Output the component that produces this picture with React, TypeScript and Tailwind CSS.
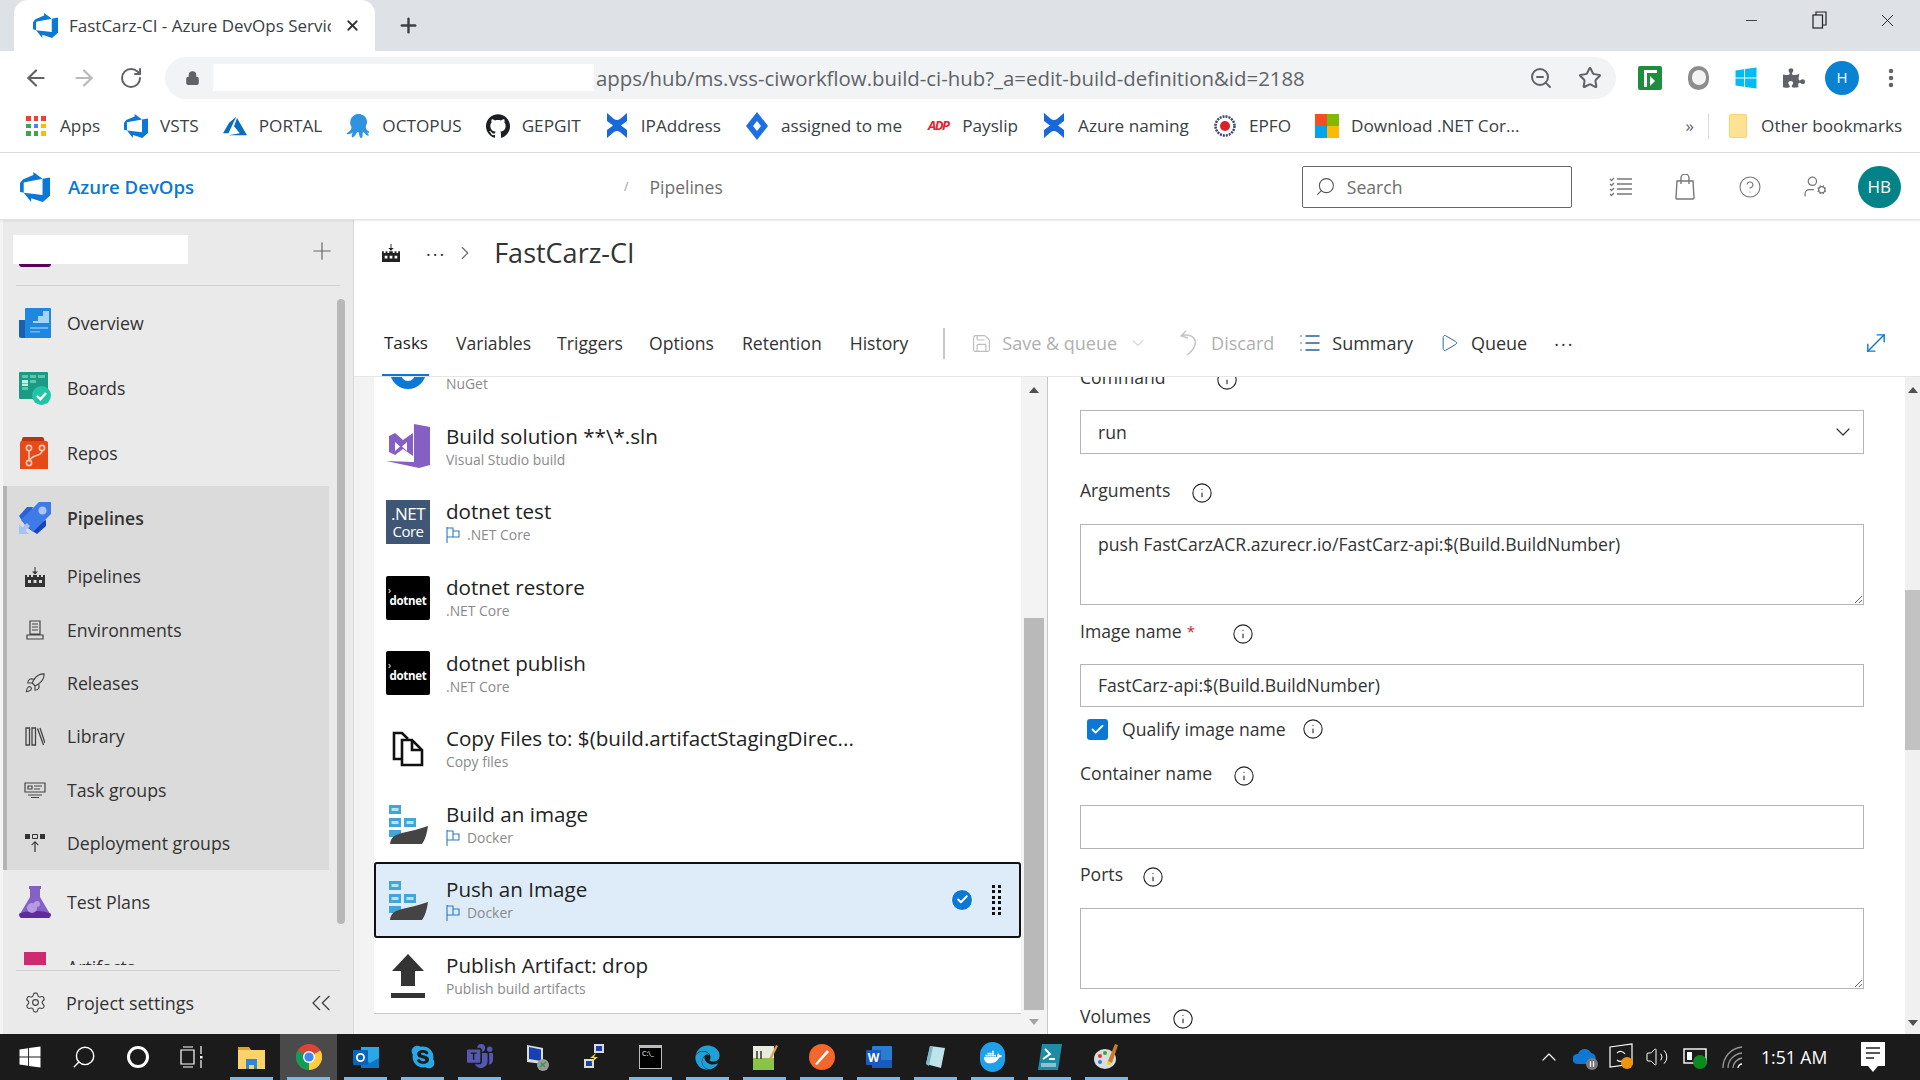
import {
  ArrowLeft, ArrowRight, RotateCw, Lock, ZoomOut, Star, MoreVertical, Plus, X, Minus, Search, CircleHelp,
  UserCog, Settings, ChevronsLeft, ChevronDown, ChevronRight, Info, Save, List, Play, MoveDiagonal,
  Rocket, Check, Volume2, ChevronUp,
} from "lucide-react";
import { SiOctopusdeploy, SiGithub } from "react-icons/si";
import { FaWindows, FaSkype, FaDocker, FaEdge, FaPuzzlePiece } from "react-icons/fa";
import { BsMicrosoftTeams } from "react-icons/bs";

function DevOpsLogo({ className }: { className?: string }) {
  return (
    <svg className={className} viewBox="0 0 24 24" fill="currentColor">
      <path d="M0 8.877L2.247 5.91l8.405-3.416V.022l7.37 5.393L2.966 8.338v8.225L0 15.707zm24-4.45v14.651l-5.753 4.9-9.303-3.057v3.056l-5.978-7.416 15.057 1.798V5.415z" />
    </svg>
  );
}

function AzureLogo({ className }: { className?: string }) {
  return (
    <svg className={className} viewBox="0 0 24 24" fill="currentColor">
      <path d="M5.483 21.3H24L14.025 4.013l-3.038 8.347 5.836 6.938L5.483 21.3zM13.23 2.7L6.105 8.677 0 19.253h5.505v.014L13.23 2.7z" />
    </svg>
  );
}

function ConfluenceMark() {
  return (
    <svg width="24" height="27" viewBox="0 0 24 27" fill="#1868db">
      <path d="M2 1l7 6q3 2 6 0l7-6v8l-6 4.5 6 4.5v8l-7-6q-3-2-6 0l-7 6v-8l6-4.5L2 9z" />
    </svg>
  );
}

function JiraMark() {
  return (
    <svg width="22" height="28" viewBox="0 0 22 28">
      <path d="M11 0l11 14-11 14L0 14z" fill="#1d6fe8" />
      <path d="M11 9l4 5-4 5-4-5z" fill="#fff" />
    </svg>
  );
}

function AppsGrid() {
  const colors = ["#ea4335", "#ea4335", "#ea4335", "#34a853", "#4285f4", "#fbbc05", "#34a853", "#34a853", "#fbbc05"];
  return (
    <div className="grid grid-cols-3 gap-[3px] w-[20px]">
      {colors.map((c, i) => (
        <span key={i} className="w-[4.5px] h-[4.5px]" style={{ background: c }} />
      ))}
    </div>
  );
}

function MsLogo() {
  return (
    <div className="grid grid-cols-2 w-[24px] h-[24px]">
      <span className="bg-[#f25022]" />
      <span className="bg-[#7fba00]" />
      <span className="bg-[#00a4ef]" />
      <span className="bg-[#ffb900]" />
    </div>
  );
}

function Bookmark({ icon, label }: { icon: React.ReactNode; label: string }) {
  return (
    <div className="flex items-center gap-[12px]">
      <span className="w-[24px] h-[24px] flex items-center justify-center shrink-0">{icon}</span>
      <span className="text-[17.2px] text-[#3c4043] whitespace-nowrap">{label}</span>
    </div>
  );
}

function ChromeFrame() {
  return (
    <>
      <div className="h-[51px] bg-[#dee1e6] flex items-end pl-[14px] shrink-0">
        <div className="w-[361px] h-[51px] bg-white rounded-t-[14px] flex items-center pl-[19px] pr-[14px]">
          <DevOpsLogo className="text-[#0a78d4] w-[25px] h-[25px] shrink-0" />
          <div className="ml-[11px] w-[262px] overflow-hidden whitespace-nowrap text-[17px] text-[#3c4043]">
            FastCarz-CI - Azure DevOps Services
          </div>
          <X className="ml-auto w-[17px] h-[17px] text-[#333]" strokeWidth={2.5} />
        </div>
        <div className="h-[51px] flex items-center ml-[22px]">
          <Plus className="w-[23px] h-[23px] text-[#3c4043]" strokeWidth={2.5} />
        </div>
        <div className="ml-auto h-[40px] self-start flex items-center text-[#222]">
          <div className="w-[66px] flex justify-center"><Minus className="w-[17px] h-[17px]" strokeWidth={1.2} /></div>
          <div className="w-[70px] flex justify-center">
            <svg width="15" height="18" viewBox="0 0 15 18" fill="none" stroke="#222" strokeWidth="1.2">
              <rect x="1" y="4" width="9.5" height="13" />
              <path d="M4 4V1h10v13h-3.5" />
            </svg>
          </div>
          <div className="w-[66px] flex justify-center"><X className="w-[21px] h-[21px]" strokeWidth={1.1} /></div>
        </div>
      </div>
      <div className="h-[53px] flex items-center bg-white shrink-0">
        <div className="w-[165px] flex items-center text-[#5f6368] pl-[23px] gap-[22px]">
          <ArrowLeft className="w-[26px] h-[26px]" strokeWidth={2} />
          <ArrowRight className="w-[26px] h-[26px] text-[#b8babd]" strokeWidth={2} />
          <RotateCw className="w-[24px] h-[24px]" strokeWidth={2} />
        </div>
        <div className="w-[1451px] h-[42px] rounded-full bg-[#f1f3f4] flex items-center pl-[20px] pr-[14px]">
          <Lock className="w-[15px] h-[18px] text-[#5f6368] fill-[#5f6368]" />
          <div className="ml-[13px] w-[381px] h-[27px] bg-white shrink-0" />
          <div className="ml-[2px] mt-[1px] text-[20.4px] text-[#5f6368] whitespace-nowrap">
            apps/hub/ms.vss-ciworkflow.build-ci-hub?_a=edit-build-definition&amp;id=2188
          </div>
          <ZoomOut className="ml-auto w-[24px] h-[24px] text-[#5f6368]" strokeWidth={2} />
          <Star className="ml-[25px] w-[24px] h-[24px] text-[#5f6368]" strokeWidth={2} />
        </div>
        <div className="flex items-center ml-[22px]">
          <svg width="24" height="24" viewBox="0 0 24 24">
            <rect width="24" height="24" rx="2" fill="#1e8e3e" />
            <path d="M6 21V4h13v3H9v14z" fill="#fff" />
            <path d="M12 10l5 5-5 5z" fill="#fff" />
          </svg>
          <div className="ml-[26px] w-[21px] h-[24px] rounded-full bg-[#8d8d8d] flex items-center justify-center">
            <span className="w-[14px] h-[15px] rounded-full bg-[#f4f4f4]" />
          </div>
          <FaWindows className="ml-[26px] w-[22px] h-[24px] text-[#00bcf2]" />
          <FaPuzzlePiece className="ml-[26px] w-[22px] h-[22px] text-[#5f6368]" />
          <div className="ml-[20px] w-[34px] h-[34px] rounded-full bg-[#0a82d1] text-white text-[15px] flex items-center justify-center">H</div>
          <MoreVertical className="ml-[20px] w-[24px] h-[24px] text-[#5f6368]" strokeWidth={2.5} />
        </div>
      </div>
      <div className="h-[49px] flex items-center pl-[24px] pb-[4px] bg-white border-b border-[#dadce0] shrink-0">
        <div className="flex items-center gap-[24px]">
          <Bookmark icon={<AppsGrid />} label="Apps" />
          <Bookmark icon={<DevOpsLogo className="text-[#0a78d4] w-[24px] h-[24px]" />} label="VSTS" />
          <Bookmark icon={<AzureLogo className="text-[#0a6cbd] w-[24px] h-[24px]" />} label="PORTAL" />
          <Bookmark icon={<SiOctopusdeploy className="text-[#2f93e0] w-[24px] h-[24px]" />} label="OCTOPUS" />
          <Bookmark icon={<SiGithub className="text-[#1b1f23] w-[24px] h-[24px]" />} label="GEPGIT" />
          <Bookmark icon={<ConfluenceMark />} label="IPAddress" />
          <Bookmark icon={<JiraMark />} label="assigned to me" />
          <Bookmark
            icon={<span className="text-[#e8212e] text-[13px] font-bold italic tracking-[-1.5px]">ADP</span>}
            label="Payslip"
          />
          <Bookmark icon={<ConfluenceMark />} label="Azure naming" />
          <Bookmark
            icon={
              <svg width="22" height="24" viewBox="0 0 22 24">
                <circle cx="11" cy="12" r="9.5" fill="#fff" stroke="#39417e" strokeWidth="2.5" strokeDasharray="2 1" />
                <circle cx="11" cy="12" r="5" fill="#d8232a" />
              </svg>
            }
            label="EPFO"
          />
          <Bookmark icon={<MsLogo />} label="Download .NET Cor..." />
        </div>
        <span className="ml-[166px] text-[17px] text-[#5f6368]">»</span>
        <span className="ml-[14px] w-px h-[26px] bg-[#dadce0]" />
        <div className="ml-[20px] flex items-center gap-[14px]">
          <span className="w-[18px] h-[24px] rounded-[2px] bg-[#fde293] border border-[#f6d36b]" />
          <span className="text-[17.2px] text-[#3c4043] whitespace-nowrap">Other bookmarks</span>
        </div>
      </div>
    </>
  );
}

function TopBar() {
  return (
    <div className="h-[67px] bg-white flex items-center pt-[1px] border-b border-[#e3e3e3] shadow-[0_1px_2px_rgba(0,0,0,0.08)] shrink-0 z-10">
      <DevOpsLogo className="ml-[20px] text-[#0a78d4] w-[30px] h-[30px]" />
      <span className="ml-[18px] text-[18.6px] font-semibold text-[#0a78d4] whitespace-nowrap">Azure DevOps</span>
      <span className="ml-[430px] text-[12px] text-[#999]">/</span>
      <span className="ml-[21px] mt-[1px] text-[17.5px] text-[#6d6d6d]">Pipelines</span>
      <div className="ml-[579px] w-[270px] h-[42px] border border-[#666] rounded-[2px] flex items-center pl-[12px]">
        <Search className="w-[21px] h-[21px] text-[#555] -scale-x-100" strokeWidth={1.2} />
        <span className="ml-[11px] mt-[1px] text-[17.6px] text-[#6d6d6d]">Search</span>
      </div>
      <svg className="ml-[37px]" width="24" height="24" viewBox="0 0 24 24" fill="none" stroke="#777" strokeWidth="1.3">
        <path d="M8 4h15M8 9h15M8 14h15M8 19h15M1 4l1.5 1.5L5 3M1 9l1.5 1.5L5 8M1 14l1.5 1.5L5 13M1 19l1.5 1.5L5 18" />
      </svg>
      <svg className="ml-[40px]" width="24" height="26" viewBox="0 0 24 26" fill="none" stroke="#777" strokeWidth="1.4">
        <path d="M4 7h16l1 17a1 1 0 0 1-1 1H4a1 1 0 0 1-1-1z" />
        <path d="M8 10V4a4 4 0 0 1 8 0v6" />
      </svg>
      <CircleHelp className="ml-[41px] w-[24px] h-[24px] text-[#777]" strokeWidth={1.1} />
      <UserCog className="ml-[41px] w-[25px] h-[25px] text-[#777]" strokeWidth={1.2} />
      <div className="ml-[30px] w-[43px] h-[42px] rounded-full bg-[#038387] text-white text-[17px] flex items-center justify-center">HB</div>
    </div>
  );
}

function OverviewIcon() {
  return (
    <svg width="32" height="32" viewBox="0 0 32 32">
      <path d="M0 12h8v18H2a2 2 0 0 1-2-2z" fill="#1a62ad" />
      <rect x="6" y="0" width="26" height="30" rx="1" fill="#1f87e0" />
      <path d="M14 13h5V8h5V3h6v12H14z" fill="#a6d4f7" />
      <path d="M11 19h18v2H11zM11 23h10v1.5H11z" fill="#6cb6ef" />
    </svg>
  );
}
function BoardsIcon() {
  return (
    <svg width="32" height="33" viewBox="0 0 32 33">
      <rect width="29" height="27" rx="1" fill="#1c9a83" />
      <path d="M3 3h6v3H3zM11 3h6v3h-6zM19 3h7v3h-7zM11 8h6v3h-6zM3 15h6v3H3z" fill="#5dc7ae" />
      <path d="M3 8h6v3H3zM3 11.5h6V14H3z" fill="#bdf3e3" />
      <circle cx="22.5" cy="23.5" r="9.5" fill="#23c4a5" />
      <path d="M18 24l3.4 3.2L27 21" stroke="#fff" strokeWidth="2.4" fill="none" />
    </svg>
  );
}
function ReposIcon() {
  return (
    <svg width="32" height="33" viewBox="0 0 32 33">
      <path d="M3 2a2 2 0 0 1 2-2h18a2 2 0 0 1 2 2l1 4H2z" fill="#b8360e" />
      <path d="M1 6a2 2 0 0 1 2-2h24a2 2 0 0 1 2 2v26H1z" fill="#e64a19" />
      <g fill="none" stroke="#f8c8b4" strokeWidth="1.6">
        <circle cx="10" cy="11" r="2.6" />
        <circle cx="23" cy="11" r="2.6" />
        <circle cx="10" cy="26" r="2.6" />
        <path d="M10 14v9M23 14c0 5-10 4-12 9" />
      </g>
    </svg>
  );
}
function PipelinesColorIcon() {
  return (
    <svg width="32" height="32" viewBox="0 0 32 32">
      <path d="M0 14L8 5h6L6 23z" fill="#2a62d6" />
      <path d="M18 32l9-8v-6L9 26z" fill="#1546c0" />
      <path d="M20 0h12v12L14 30 2 18z" fill="#3f7ae6" />
      <circle cx="23.5" cy="8.5" r="4" fill="#a9c6f7" />
      <path d="M0 32V22l3.5 3.5L8 21l3 3-4.5 4.5L10 32z" fill="#a6c3f7" />
    </svg>
  );
}
function FlaskIcon() {
  return (
    <svg width="32" height="32" viewBox="0 0 32 32">
      <path d="M10 0h12v3h-1v8l10 17c1 2 0 4-2 4H3c-2 0-3-2-2-4l10-17V3h-1z" fill="#8661c5" />
      <path d="M0 28c4-4 28-4 32 0 0 2-1 4-3 4H3c-2 0-3-2-3-4z" fill="#5c2d9e" />
      <circle cx="13" cy="22" r="5" fill="#b79ae0" />
      <circle cx="18" cy="18" r="3" fill="#b79ae0" />
    </svg>
  );
}
function FactoryIcon({ size = 20, color = "#333" }: { size?: number; color?: string }) {
  return (
    <svg width={size} height={size} viewBox="0 0 20 20" fill={color}>
      <path d="M9.5 0h1v4.5H13L10 7.5 7 4.5h2.5z" />
      <path d="M0 8h2v2h2V8h2v2h2V8h4v2h2V8h2v2h2V8h2v12H0zm3 5v3h3v-3zm5.5 0v3h3v-3zM14 13v3h3v-3z" />
    </svg>
  );
}
function EnvIcon() {
  return (
    <svg width="20" height="20" viewBox="0 0 20 20" fill="none" stroke="#444" strokeWidth="1.2">
      <path d="M5 1h10v13H5zM2 15h16v4H2zM7 4h6M7 7h6M7 10h6" />
    </svg>
  );
}
function LibraryIcon() {
  return (
    <svg width="20" height="20" viewBox="0 0 20 20" fill="none" stroke="#444" strokeWidth="1.3">
      <path d="M1 1h3.5v17H1zM7 1h3.5v17H7zM12.5 1.5L18.5 18" />
      <path d="M15 1l5 15" />
    </svg>
  );
}
function TaskGroupIcon() {
  return (
    <svg width="22" height="16" viewBox="0 0 22 16" fill="none" stroke="#444" strokeWidth="1.2">
      <path d="M1 1h20v9H1zM4 13h14M7 15.5h8" />
      <path d="M4 4h4v3H4zM10 4h8M10 7h6" />
    </svg>
  );
}
function DeployIcon() {
  return (
    <svg width="20" height="20" viewBox="0 0 20 20" fill="#333">
      <path d="M0 1h5v5H0zM15 1h5v5h-5z" />
      <path d="M7.5 1.5h5v4h-5z" fill="none" stroke="#333" />
      <path d="M9.4 19v-9L7 12.4l-.7-.7L10 8l3.7 3.7-.7.7-2.4-2.4v9z" />
    </svg>
  );
}

function NavItem({ icon, label, sub, bold, className }: { icon: React.ReactNode; label: string; sub?: boolean; bold?: boolean; className?: string }) {
  return (
    <div className={"flex items-center shrink-0 " + (sub ? "h-[53.3px] " : "h-[65px] ") + (className ?? "")}>
      <div className="w-[32px] ml-[16px] flex items-center justify-center shrink-0">{icon}</div>
      <span className={"ml-[16px] text-[17.7px] text-[#333] whitespace-nowrap " + (bold ? "font-semibold" : "")}>{label}</span>
    </div>
  );
}

function Sidebar() {
  return (
    <div className="w-[354px] shrink-0 h-full flex flex-col bg-[#eaeaea] border-l-[3px] border-l-[#f4f4f4] border-r border-r-[#d8d8d8]">
      <div className="h-[65px] shrink-0 flex items-center mx-[13px]">
        <div className="flex flex-col -ml-[3px] mb-[3px]">
          <div className="w-[175px] h-[29px] bg-white" />
          <div className="ml-[6px] w-[32px] h-[3px] bg-[#5c005c] rounded-b-[3px]" />
        </div>
        <Plus className="ml-auto mr-[4px] w-[28px] h-[28px] text-[#666] mb-[4px]" strokeWidth={1} />
      </div>
      <div className="mx-[13px] h-px bg-[#d0d0d0] shrink-0" />
      <div className="flex-1 flex min-h-0">
        <div className="w-[326px] h-[679px] overflow-hidden flex flex-col pt-[5px] shrink-0">
          <NavItem icon={<OverviewIcon />} label="Overview" />
          <NavItem icon={<BoardsIcon />} label="Boards" />
          <NavItem icon={<ReposIcon />} label="Repos" />
          <div className="bg-[#dbdbdb] border-l-[4px] border-l-[#b4b4b4]">
            <div className="-ml-[4px]">
              <NavItem icon={<PipelinesColorIcon />} label="Pipelines" bold className="!h-[64px]" />
              <NavItem sub icon={<FactoryIcon />} label="Pipelines" />
              <NavItem sub icon={<EnvIcon />} label="Environments" />
              <NavItem sub icon={<Rocket className="w-[22px] h-[22px] text-[#444]" strokeWidth={1.2} />} label="Releases" />
              <NavItem sub icon={<LibraryIcon />} label="Library" />
              <NavItem sub icon={<TaskGroupIcon />} label="Task groups" />
              <NavItem sub icon={<DeployIcon />} label="Deployment groups" />
            </div>
          </div>
          <NavItem icon={<FlaskIcon />} label="Test Plans" />
          <NavItem icon={<span className="block w-[22px] h-[30px] bg-[#cf2a70]" />} label="Artifacts" />
        </div>
        <div className="ml-[8px] mt-[13px] w-[8px] h-[625px] bg-[#b8b8b8] rounded-full shrink-0" />
      </div>
      <div className="mx-[13px] h-px bg-[#d0d0d0] shrink-0" />
      <div className="h-[63px] shrink-0 flex items-center pl-[21px] pr-[16px]">
        <Settings className="w-[23px] h-[23px] text-[#444]" strokeWidth={1.2} />
        <span className="ml-[19px] mt-[1px] text-[17.9px] text-[#333]">Project settings</span>
        <ChevronsLeft className="ml-auto w-[32px] h-[32px] text-[#444]" strokeWidth={1} />
      </div>
    </div>
  );
}

function DockerIcon() {
  return (
    <svg width="44" height="44" viewBox="0 0 44 44">
      <g fill="#41a5d9">
        <rect x="3" y="3" width="12" height="9" />
        <rect x="3" y="16" width="12" height="9" />
        <rect x="18" y="16" width="12" height="9" />
        <rect x="3" y="28" width="12" height="7" />
      </g>
      <g fill="#b7e2f7">
        <rect x="5.5" y="6" width="7" height="3" />
        <rect x="5.5" y="19" width="7" height="3" />
        <rect x="20.5" y="19" width="7" height="3" />
      </g>
      <path d="M4 42c1-8 6-9 12-11 8-2 18-4 26-7-1 7-3 14-6 18z" fill="#444" />
    </svg>
  );
}
function VsIcon() {
  return (
    <svg width="44" height="44" viewBox="0 0 44 44">
      <path d="M44 3v38l-11 3L0 37l28 1V0z" fill="#865fc5" />
      <path d="M3 12l6-3 8 7 10-7v23l-10-7-8 6-6-3zm6 6v9l5-4.5z M21 18l-5 4.5L21 27z" fill="#865fc5" fillRule="evenodd" />
    </svg>
  );
}
function NetCoreIcon() {
  return (
    <div className="w-[44px] h-[44px] bg-[#3f5674] text-white flex flex-col items-center justify-center overflow-hidden">
      <span className="text-[17px] leading-[19px] tracking-[-0.5px]">.NET</span>
      <span className="text-[15px] leading-[17px] tracking-[-0.5px]">Core</span>
    </div>
  );
}
function DotnetIcon() {
  return (
    <div className="w-[44px] h-[44px] bg-black rounded-[2px] text-white flex flex-col justify-center overflow-hidden leading-none">
      <span className="text-[10px] pl-[2px] -mt-[4px]">›</span>
      <span className="text-[11.5px] font-bold text-center tracking-[-0.3px]">dotnet</span>
    </div>
  );
}
function CopyIcon() {
  return (
    <svg width="32" height="36" viewBox="0 0 32 36" fill="none" stroke="#111" strokeWidth="2.6">
      <path d="M9 28H2V2h8l6 6" />
      <path d="M10 9h10l10 10v15H10z" fill="#fff" />
      <path d="M20 9v10h10" />
    </svg>
  );
}
function UploadIcon() {
  return (
    <svg width="34" height="44" viewBox="0 0 34 44" fill="#333">
      <path d="M17 0l16 17H24v15H10V17H1z" />
      <rect x="0" y="39" width="34" height="5" />
    </svg>
  );
}

function TaskRow({ title, sub, icon, flag, selected }: { title?: string; sub: string; icon: React.ReactNode; flag?: boolean; selected?: boolean }) {
  return (
    <div
      className={
        "h-[75.6px] shrink-0 flex items-center pl-[10px] pr-[18px] rounded-[3px] border-2 " +
        (selected ? "bg-[#deecf9] border-[#111]" : "border-transparent")
      }
    >
      <div className="w-[44px] h-[44px] flex items-center justify-center shrink-0">{icon}</div>
      <div className="ml-[16px] flex flex-col min-w-0">
        <span className="text-[20.6px] leading-[26px] text-[#222] whitespace-nowrap h-[26px]">{title}</span>
        <span className="mt-[1px] flex items-center text-[13.9px] leading-[20px] text-[#8a8a8a]">
          {flag ? (
            <svg className="mr-[6px]" width="15" height="16" viewBox="0 0 15 16" fill="none" stroke="#2a7bc0" strokeWidth="1.1">
              <path d="M1 0v16M1 1h6v9H1M7 4h6v6H7" />
            </svg>
          ) : null}
          {sub}
        </span>
      </div>
      {selected ? (
        <div className="ml-auto flex items-center">
          <span className="w-[22px] h-[22px] rounded-full bg-[#0a78d4] border border-white flex items-center justify-center">
            <Check className="w-[13px] h-[13px] text-white" strokeWidth={3.5} />
          </span>
          <span className="ml-[19px] grid grid-cols-2 gap-x-[3px] gap-y-[2.5px]">
            {Array.from({ length: 12 }).map((_, i) => (
              <span key={i} className="w-[3px] h-[3px] bg-[#111]" />
            ))}
          </span>
        </div>
      ) : null}
    </div>
  );
}

function TaskList() {
  return (
    <div className="w-[693px] shrink-0 h-full flex bg-[#f3f3f3]">
      <div className="ml-[20px] w-[647px] h-[637px] bg-white border-b border-[#c8c8c8] overflow-hidden flex flex-col shrink-0">
        <div className="-mt-[44px] flex flex-col">
          <TaskRow
            sub="NuGet"
            icon={
              <div className="w-[36px] h-[36px] rounded-full bg-[#0a78d4] flex items-center justify-center">
                <span className="w-[14px] h-[20px] rounded-full bg-white" />
              </div>
            }
          />
          <TaskRow title="Build solution **\*.sln" sub="Visual Studio build" icon={<VsIcon />} />
          <TaskRow title="dotnet test" sub=".NET Core" flag icon={<NetCoreIcon />} />
          <TaskRow title="dotnet restore" sub=".NET Core" icon={<DotnetIcon />} />
          <TaskRow title="dotnet publish" sub=".NET Core" icon={<DotnetIcon />} />
          <TaskRow title="Copy Files to: $(build.artifactStagingDirec..." sub="Copy files" icon={<CopyIcon />} />
          <TaskRow title="Build an image" sub="Docker" flag icon={<DockerIcon />} />
          <TaskRow title="Push an Image" sub="Docker" flag selected icon={<DockerIcon />} />
          <TaskRow title="Publish Artifact: drop" sub="Publish build artifacts" icon={<UploadIcon />} />
        </div>
      </div>
      <div className="w-[26px] h-full flex flex-col items-center shrink-0">
        <span className="mt-[10px] w-0 h-0 border-x-[5px] border-x-transparent border-b-[6px] border-b-[#505050]" />
        <div className="mt-[225px] w-[20px] h-[392px] bg-[#b9b9b9]" />
        <span className="mt-[9px] w-0 h-0 border-x-[5px] border-x-transparent border-t-[6px] border-t-[#a3a3a3]" />
      </div>
    </div>
  );
}

function Label({ text, required, iconGap, className }: { text: string; required?: boolean; iconGap: string; className: string }) {
  return (
    <div className={"h-[34px] flex items-center shrink-0 " + className}>
      <span className="-mt-[2px] text-[17.6px] text-[#333] whitespace-nowrap">{text}</span>
      {required ? <span className="ml-[5px] -mt-[2px] text-[15px] text-[#c4262e]">*</span> : null}
      <Info className={"mt-[3px] w-[22px] h-[22px] text-[#222] " + iconGap} strokeWidth={1.2} />
    </div>
  );
}

function DetailForm() {
  const boxClass = "block w-[784px] border border-[#b5b5b5] px-[17px] text-[17.6px] text-[#333] shrink-0 outline-none bg-white font-['Open_Sans',sans-serif]";
  return (
    <div className="flex-1 min-w-0 h-full flex border-l border-l-[#c8c8c8]">
      <div className="flex-1 flex flex-col pl-[32px] overflow-hidden">
        <Label text="Command" iconGap="ml-[50px]" className="-mt-[16px]" />
        <div className="mt-[15px] w-[784px] h-[44px] border border-[#b5b5b5] flex items-center px-[17px] shrink-0">
          <span className="text-[17.6px] text-[#333]">run</span>
          <ChevronDown className="ml-auto -mr-[9px] w-[24px] h-[24px] text-[#333]" strokeWidth={1.2} />
        </div>
        <Label text="Arguments" iconGap="ml-[21px]" className="mt-[20px]" />
        <textarea
          readOnly
          value="push FastCarzACR.azurecr.io/FastCarz-api:$(Build.BuildNumber)"
          className={boxClass + " mt-[16px] h-[81px] py-[6px] resize-y"}
        />
        <Label text="Image name" required iconGap="ml-[37px]" className="mt-[10px]" />
        <input readOnly value="FastCarz-api:$(Build.BuildNumber)" className={boxClass + " mt-[15px] h-[43px] pb-[2px]"} />
        <div className="mt-[5px] h-[34px] flex items-center pl-[7px] shrink-0">
          <span className="w-[21px] h-[21px] rounded-[3px] bg-[#0a78d4] flex items-center justify-center">
            <Check className="w-[15px] h-[15px] text-white" strokeWidth={3} />
          </span>
          <span className="ml-[14px] text-[17.6px] text-[#333]">Qualify image name</span>
          <Info className="ml-[16px] w-[22px] h-[22px] text-[#222]" strokeWidth={1.2} />
        </div>
        <Label text="Container name" iconGap="ml-[21px]" className="mt-[11px]" />
        <input readOnly className={boxClass + " mt-[14px] h-[44px]"} />
        <Label text="Ports" iconGap="ml-[19px]" className="mt-[9px]" />
        <textarea readOnly className={boxClass + " mt-[16px] h-[81px] resize-y"} />
        <Label text="Volumes" iconGap="ml-[21px]" className="mt-[11px]" />
      </div>
      <div className="w-[15px] h-full bg-[#f0f0f0] flex flex-col items-center shrink-0">
        <span className="mt-[10px] w-0 h-0 border-x-[5px] border-x-transparent border-b-[6px] border-b-[#505050]" />
        <div className="mt-[197px] w-full h-[160px] bg-[#c2c2c2]" />
        <span className="mt-auto mb-[8px] w-0 h-0 border-x-[5px] border-x-transparent border-t-[6px] border-t-[#505050]" />
      </div>
    </div>
  );
}

function MainArea() {
  return (
    <div className="flex-1 min-w-0 flex flex-col h-full bg-white">
      <div className="h-[66px] shrink-0 flex items-center pl-[28px]">
        <FactoryIcon size={18} color="#222" />
        <span className="ml-[26px] tracking-[2px] text-[18px] leading-none text-[#333] -mt-[8px]">...</span>
        <ChevronRight className="ml-[8px] w-[22px] h-[22px] text-[#666]" strokeWidth={1.2} />
        <span className="ml-[18px] mt-[1px] text-[27px] text-[#333] whitespace-nowrap">FastCarz-CI</span>
      </div>
      <div className="mt-[26px] h-[65px] shrink-0 flex items-center pl-[30px] pr-[30px] pb-[2px] border-b border-[#e6e6e6]">
        <div className="h-[63px] flex flex-col justify-center relative">
          <span className="text-[17px] font-medium text-[#222]">Tasks</span>
          <span className="absolute -left-[2px] right-[-1px] -bottom-[1px] h-[2px] bg-[#0a78d4]" />
        </div>
        <span className="ml-[28px] text-[17.6px] text-[#333]">Variables</span>
        <span className="ml-[26px] text-[17.6px] text-[#333]">Triggers</span>
        <span className="ml-[26px] text-[17.6px] text-[#333]">Options</span>
        <span className="ml-[28px] text-[17.6px] text-[#333]">Retention</span>
        <span className="ml-[28px] text-[17.6px] text-[#333]">History</span>
        <span className="ml-[35px] w-[2px] h-[31px] bg-[#c8c8c8]" />
        <Save className="ml-[26px] w-[21px] h-[21px] text-[#bdbdbd]" strokeWidth={1.3} />
        <span className="ml-[10px] text-[18px] text-[#b0b0b0] whitespace-nowrap">Save &amp; queue</span>
        <ChevronDown className="ml-[11px] w-[20px] h-[20px] text-[#bdbdbd]" strokeWidth={1.2} />
        <svg className="ml-[30px]" width="22" height="26" viewBox="0 0 22 26" fill="none" stroke="#c4c4c4" strokeWidth="1.4">
          <path d="M8 1L3 6l7 2M3 6c8-3 16 1 14 9-1 4-4 7-8 10" />
        </svg>
        <span className="ml-[11px] text-[18px] text-[#b0b0b0]">Discard</span>
        <List className="ml-[24px] w-[24px] h-[24px] text-[#2a5f9c]" strokeWidth={1.5} />
        <span className="ml-[10px] text-[18px] text-[#333]">Summary</span>
        <Play className="ml-[26px] w-[20px] h-[24px] text-[#2a6aa8]" strokeWidth={1.2} />
        <span className="ml-[12px] text-[18px] text-[#333]">Queue</span>
        <span className="ml-[27px] tracking-[2px] text-[18px] leading-none text-[#333] -mt-[8px]">...</span>
        <MoveDiagonal className="ml-auto w-[28px] h-[28px] text-[#0a78d4]" strokeWidth={1.2} />
      </div>
      <div className="flex-1 min-h-0 flex">
        <TaskList />
        <DetailForm />
      </div>
    </div>
  );
}

function TaskbarItem({ icon, running, active, w = "w-[57px]" }: { icon: React.ReactNode; running?: boolean; active?: boolean; w?: string }) {
  return (
    <div className={"relative h-full flex items-center justify-center shrink-0 " + w + (active ? " bg-[#4a4a4a]" : "")}>
      {icon}
      {running ? <span className="absolute bottom-0 left-[7px] right-[7px] h-[3px] bg-[#76b9ed]" /> : null}
    </div>
  );
}

function ChromeIcon() {
  return (
    <svg width="26" height="26" viewBox="0 0 26 26">
      <circle cx="13" cy="13" r="13" fill="#db4437" />
      <path d="M13 13L1.7 6.5A13 13 0 0 0 13 26z" fill="#0f9d58" />
      <path d="M13 13V26A13 13 0 0 0 24.3 6.5z" fill="#ffcd40" />
      <circle cx="13" cy="13" r="6" fill="#fff" />
      <circle cx="13" cy="13" r="4.6" fill="#4285f4" />
    </svg>
  );
}

function Taskbar() {
  return (
    <div className="h-[46px] shrink-0 bg-[#1b1b1b] flex items-center pl-[3px] text-white">
      <TaskbarItem w="w-[54px]" icon={<FaWindows className="w-[24px] h-[24px]" />} />
      <TaskbarItem w="w-[54px]" icon={<Search className="w-[26px] h-[26px] -scale-x-100" strokeWidth={1.3} />} />
      <TaskbarItem w="w-[54px]" icon={<span className="w-[22px] h-[22px] rounded-full border-[3px] border-white" />} />
      <TaskbarItem
        w="w-[54px]"
        icon={
          <svg width="24" height="24" viewBox="0 0 24 24" fill="none" stroke="#fff" strokeWidth="1.2">
            <path d="M1 5h13v14H1zM3 2h10M3 22h10M21 1v8M21 15v8" />
            <rect x="20" y="11" width="2.5" height="2.5" fill="#fff" stroke="none" />
          </svg>
        }
      />
      <div className="w-[4px]" />
      <TaskbarItem
        running
        icon={
          <svg width="27" height="24" viewBox="0 0 27 24">
            <path d="M0 2h11l2 3H0z" fill="#e3a21a" />
            <rect y="5" width="27" height="19" fill="#fcd269" />
            <path d="M8 14h11v10h-3v-4h-5v4H8z" fill="#2b88d8" />
          </svg>
        }
      />
      <TaskbarItem running active icon={<ChromeIcon />} />
      <TaskbarItem
        running
        icon={
          <svg width="26" height="26" viewBox="0 0 26 26">
            <rect x="8" y="3" width="18" height="20" fill="#28a8ea" />
            <path d="M8 14l9 5 9-5v10H8z" fill="#1174c7" />
            <rect y="6" width="15" height="15" rx="1" fill="#0a64b8" />
            <circle cx="7.5" cy="13.5" r="3.6" fill="none" stroke="#fff" strokeWidth="1.8" />
          </svg>
        }
      />
      <TaskbarItem running icon={<FaSkype className="w-[26px] h-[26px] text-[#29a8e8]" />} />
      <TaskbarItem running icon={<BsMicrosoftTeams className="w-[26px] h-[26px] text-[#5558af]" />} />
      <TaskbarItem
        icon={
          <svg width="24" height="28" viewBox="0 0 24 28">
            <path d="M2 2l16 3v16L2 19z" fill="#dcdcdc" />
            <path d="M4 4l12 2.5V18L4 16z" fill="#1740b0" />
            <circle cx="18" cy="22" r="6" fill="#9a9a9a" />
            <path d="M15 24l6-5M16 20l4 4" stroke="#2e9b3d" strokeWidth="1.5" />
          </svg>
        }
      />
      <TaskbarItem
        icon={
          <svg width="24" height="28" viewBox="0 0 24 28">
            <rect x="12" y="1" width="10" height="9" fill="#dcdcdc" />
            <rect x="14" y="3" width="6" height="5" fill="#1740b0" />
            <rect x="2" y="16" width="10" height="9" fill="#dcdcdc" />
            <rect x="4" y="18" width="6" height="5" fill="#1740b0" />
            <path d="M14 10l-6 5 4 0-3 5 7-6h-4z" fill="#f6d21f" />
          </svg>
        }
      />
      <TaskbarItem
        running
        icon={
          <div className="w-[23px] h-[24px] bg-black border border-[#bbb] border-t-[3px] flex items-start pl-[2px] pt-[2px]">
            <span className="text-[7px] leading-none text-white">C:\_</span>
          </div>
        }
      />
      <TaskbarItem running icon={<FaEdge className="w-[25px] h-[25px] text-[#1fa0d8]" />} />
      <TaskbarItem
        running
        icon={
          <svg width="26" height="28" viewBox="0 0 26 28">
            <rect x="1" y="3" width="21" height="24" fill="#e8eadd" />
            <rect x="1" y="15" width="21" height="12" fill="#8bc34a" />
            <path d="M5 8v8M9 8v8" stroke="#333" strokeWidth="1.5" />
            <path d="M17 16l7-14 2 1-7 14z" fill="#d9a441" />
          </svg>
        }
      />
      <TaskbarItem
        running
        icon={
          <svg width="26" height="26" viewBox="0 0 26 26">
            <circle cx="13" cy="13" r="13" fill="#f4662c" />
            <path d="M6 20L18 6l2 2L8 21z" fill="#fff" />
          </svg>
        }
      />
      <TaskbarItem
        running
        icon={
          <svg width="26" height="26" viewBox="0 0 26 26">
            <rect x="6" y="2" width="20" height="22" rx="1" fill="#2b7cd3" />
            <rect x="6" y="16" width="20" height="8" fill="#185abd" />
            <rect y="6" width="15" height="15" rx="1" fill="#185abd" />
            <text x="7.5" y="18" fontSize="12" fontWeight="700" fill="#fff" textAnchor="middle">W</text>
          </svg>
        }
      />
      <TaskbarItem
        running
        icon={
          <svg width="24" height="26" viewBox="0 0 24 26">
            <path d="M6 2l15 2-4 20-15-4z" fill="#bfe3ea" />
            <path d="M6 2L2 20l3 2 4-19z" fill="#7fb7c4" />
          </svg>
        }
      />
      <TaskbarItem
        running
        icon={
          <div className="w-[25px] h-[30px] rounded-full bg-[#1ea0ea] flex items-center justify-center">
            <FaDocker className="w-[18px] h-[18px] text-white" />
          </div>
        }
      />
      <TaskbarItem
        running
        icon={
          <svg width="24" height="28" viewBox="0 0 24 28">
            <path d="M4 1h20l-4 26H0z" fill="#1f8ca6" />
            <path d="M7 6l5 5-7 5" stroke="#fff" strokeWidth="2" fill="none" />
            <path d="M11 16h6" stroke="#fff" strokeWidth="2" />
            <rect x="3" y="20" width="15" height="4" fill="#8ac3cf" />
          </svg>
        }
      />
      <TaskbarItem
        running
        icon={
          <svg width="26" height="28" viewBox="0 0 26 28">
            <ellipse cx="11" cy="16" rx="11" ry="10" fill="#d8dde0" />
            <circle cx="6" cy="13" r="2" fill="#e33" />
            <circle cx="11" cy="10" r="2" fill="#3a3" />
            <circle cx="6" cy="19" r="2" fill="#37d" />
            <circle cx="15" cy="20" r="2" fill="#fc0" />
            <path d="M14 18L21 1l3 1-6 18z" fill="#c87a2a" />
          </svg>
        }
      />
      <div className="ml-[402px] flex items-center h-full">
        <ChevronUp className="w-[24px] h-[24px]" strokeWidth={1.2} />
        <svg className="ml-[12px]" width="26" height="26" viewBox="0 0 26 26">
          <path d="M4 20a5 5 0 0 1 1-10 7 7 0 0 1 13-1 6 6 0 0 1 2 11z" fill="#0f78d4" />
          <circle cx="19" cy="20" r="6" fill="#7a7a7a" />
          <path d="M17.5 17v6M20.5 17v6" stroke="#fff" strokeWidth="1.2" />
        </svg>
        <svg className="ml-[10px]" width="26" height="28" viewBox="0 0 26 28" fill="none" stroke="#fff" strokeWidth="1.2">
          <path d="M1 4l22-3v20l-22 3z" />
          <path d="M8 10a5 5 0 0 1 8 1M15 17a5 5 0 0 1-7 0" />
          <circle cx="18" cy="20" r="6" fill="#f0930d" stroke="none" />
        </svg>
        <Volume2 className="ml-[10px] w-[24px] h-[24px]" strokeWidth={1} />
        <svg className="ml-[14px]" width="26" height="24" viewBox="0 0 26 24">
          <rect x="1" y="4" width="22" height="14" fill="none" stroke="#fff" strokeWidth="1.4" />
          <rect x="4" y="7" width="5" height="8" fill="#fff" />
          <circle cx="17" cy="17" r="7" fill="#0c8a1f" />
        </svg>
        <svg className="ml-[12px]" width="24" height="24" viewBox="0 0 24 24" fill="none" stroke="#9a9a9a" strokeWidth="1.3">
          <path d="M2 23C2 12 10 3 21 2M7 23c0-8 6-14 14-15M12 23c0-5 4-9 9-10" />
          <path d="M17 23c0-2 2-4 4-4" stroke="#fff" />
        </svg>
        <span className="ml-[16px] text-[17.6px] text-white whitespace-nowrap">1:51 AM</span>
        <svg className="ml-[34px]" width="24" height="30" viewBox="0 0 24 30">
          <path d="M0 0h24v24h-7l-5 6-5-6H0z" fill="#fff" />
          <path d="M5 6h14M5 11h14M5 16h8" stroke="#222" strokeWidth="1.5" />
        </svg>
      </div>
    </div>
  );
}

export default function App() {
  return (
    <div className="w-[1920px] h-[1080px] flex flex-col overflow-hidden bg-white font-['Open_Sans',sans-serif]">
      <ChromeFrame />
      <TopBar />
      <div className="flex-1 min-h-0 flex">
        <Sidebar />
        <MainArea />
      </div>
      <Taskbar />
    </div>
  );
}
